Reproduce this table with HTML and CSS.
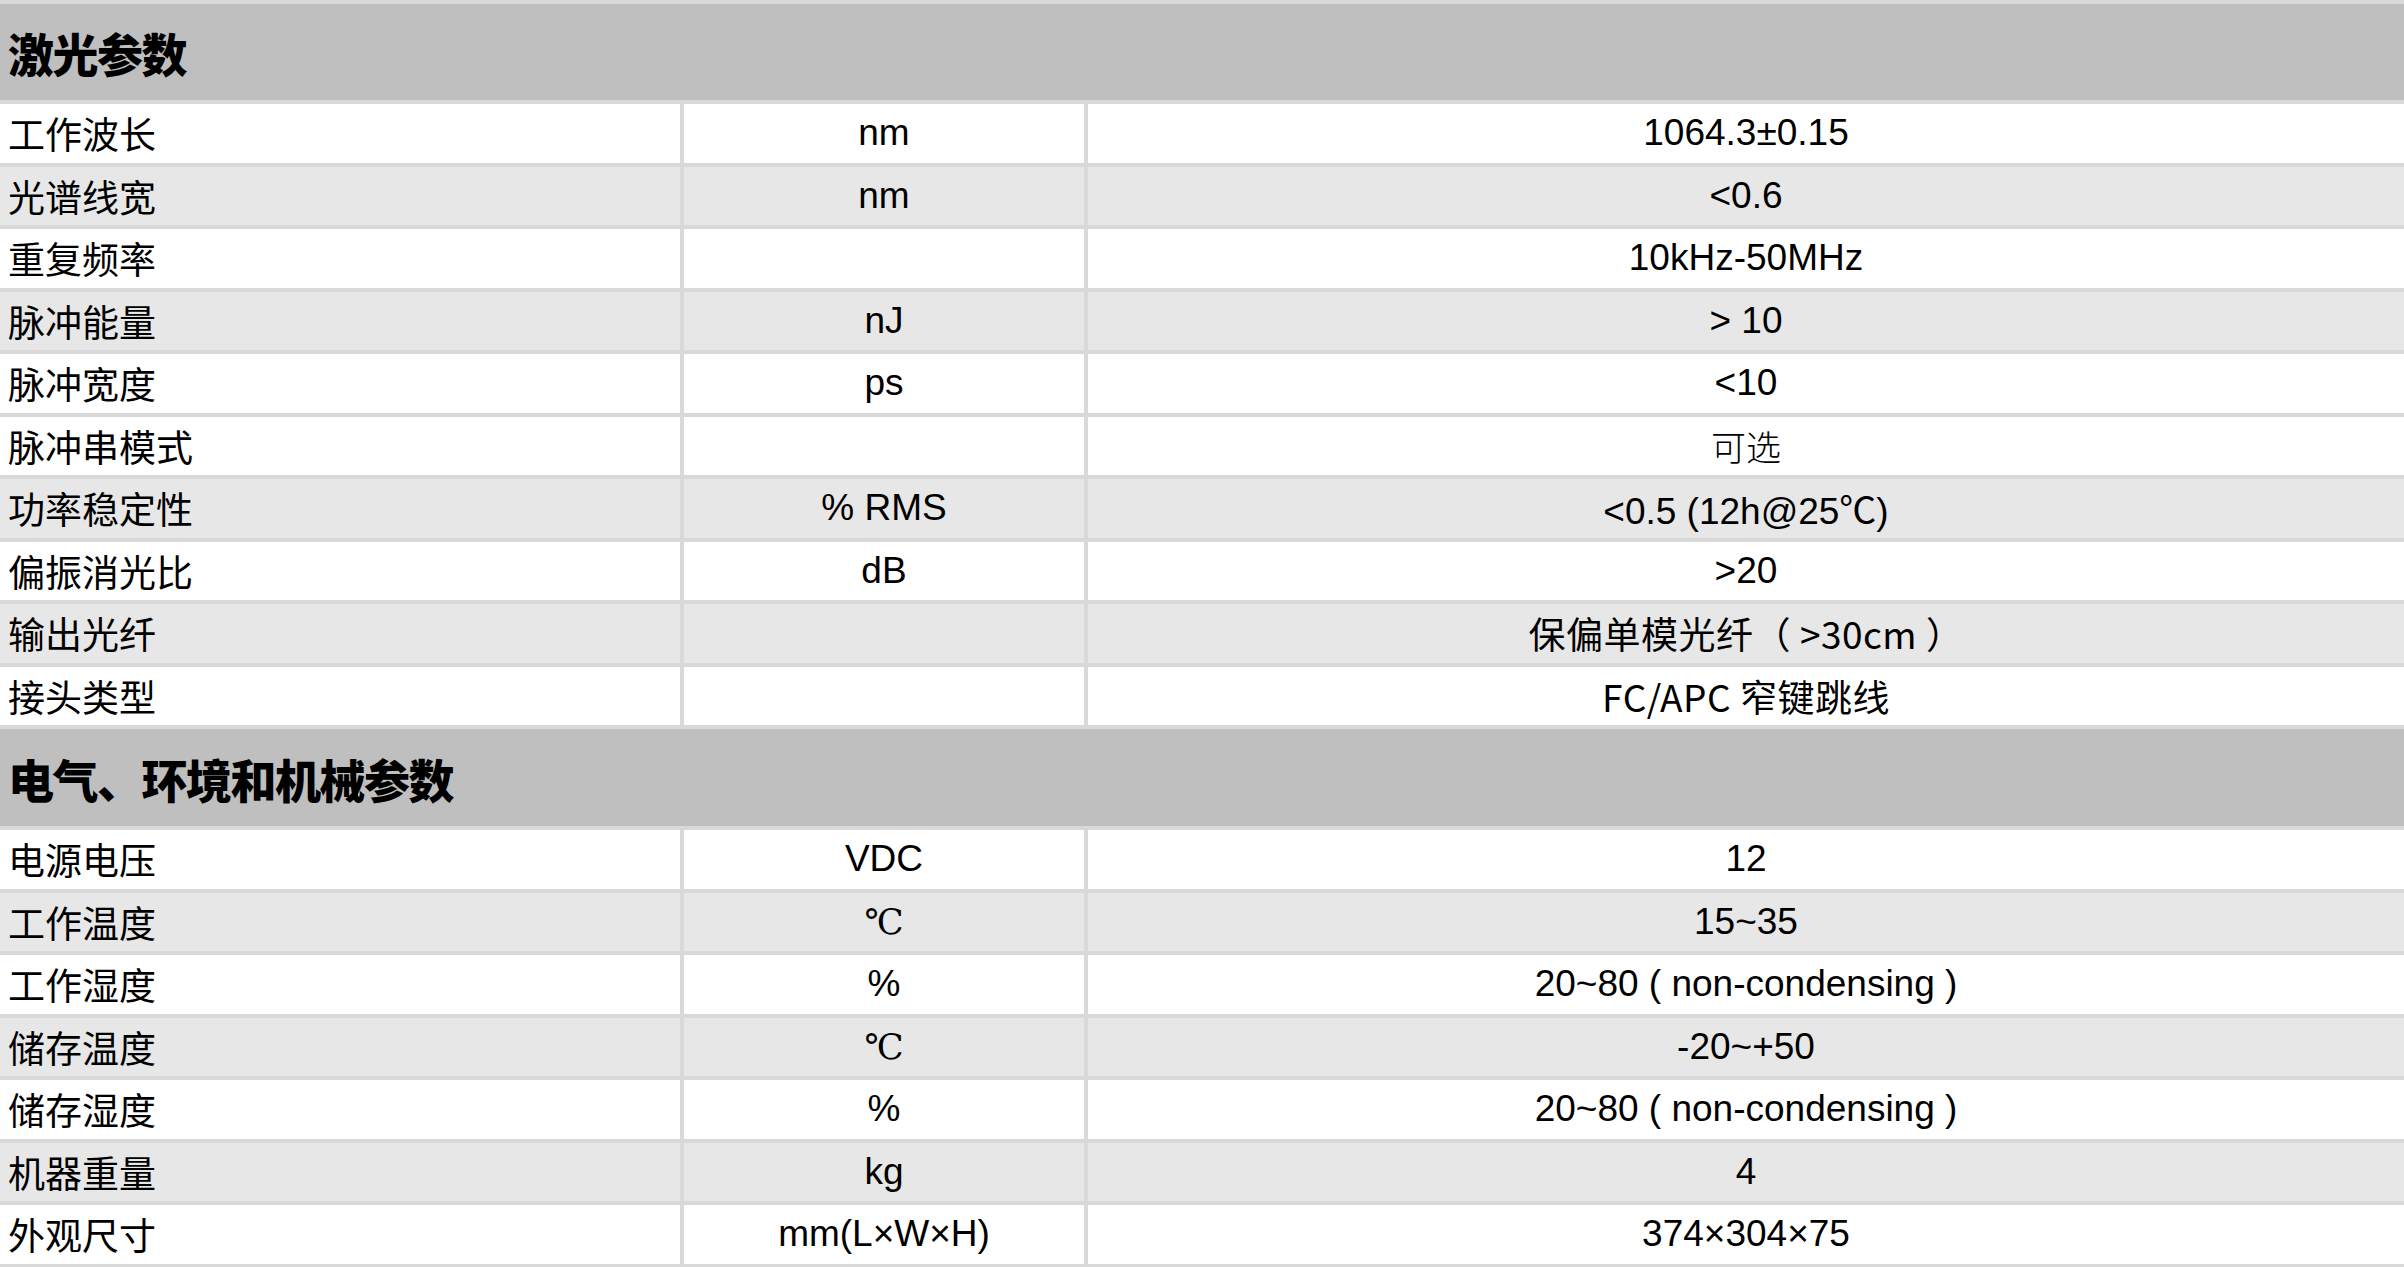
FILE: index.html
```html
<!DOCTYPE html>
<html lang="zh-CN">
<head>
<meta charset="utf-8">
<title>参数</title>
<link rel="stylesheet" href="styles.css">
</head>
<body>
<div class="spec">
  <div class="section">激光参数</div>

  <div class="cell name">工作波长</div><div class="cell unit">nm</div><div class="cell val">1064.3±0.15</div>
  <div class="cell name alt">光谱线宽</div><div class="cell unit alt">nm</div><div class="cell val alt">&lt;0.6</div>
  <div class="cell name">重复频率</div><div class="cell unit"></div><div class="cell val">10kHz-50MHz</div>
  <div class="cell name alt">脉冲能量</div><div class="cell unit alt">nJ</div><div class="cell val alt">&gt; 10</div>
  <div class="cell name">脉冲宽度</div><div class="cell unit">ps</div><div class="cell val">&lt;10</div>
  <div class="cell name">脉冲串模式</div><div class="cell unit"></div><div class="cell val serif">可选</div>
  <div class="cell name alt">功率稳定性</div><div class="cell unit alt">% RMS</div><div class="cell val alt">&lt;0.5 (12h@25℃)</div>
  <div class="cell name">偏振消光比</div><div class="cell unit">dB</div><div class="cell val">&gt;20</div>
  <div class="cell name alt">输出光纤</div><div class="cell unit alt"></div><div class="cell val alt yh">保偏单模光纤（ &gt;30cm ）</div>
  <div class="cell name">接头类型</div><div class="cell unit"></div><div class="cell val yh">FC/APC 窄键跳线</div>

  <div class="section">电气、环境和机械参数</div>

  <div class="cell name">电源电压</div><div class="cell unit">VDC</div><div class="cell val">12</div>
  <div class="cell name alt">工作温度</div><div class="cell unit alt serif">℃</div><div class="cell val alt">15~35</div>
  <div class="cell name">工作湿度</div><div class="cell unit">%</div><div class="cell val">20~80 ( non-condensing )</div>
  <div class="cell name alt">储存温度</div><div class="cell unit alt serif">℃</div><div class="cell val alt">-20~+50</div>
  <div class="cell name">储存湿度</div><div class="cell unit">%</div><div class="cell val">20~80 ( non-condensing )</div>
  <div class="cell name alt">机器重量</div><div class="cell unit alt">kg</div><div class="cell val alt">4</div>
  <div class="cell name">外观尺寸</div><div class="cell unit">mm(L×W×H)</div><div class="cell val">374×304×75</div>
</div>
</body>
</html>
```

FILE: styles.css
```css
html, body {
  margin: 0;
  padding: 0;
  overflow: hidden;
  background: #d9d9d9;
}

.spec {
  display: grid;
  grid-template-columns: 680px 400px 1fr;
  grid-template-rows: 96px repeat(10, 58.5px) 97px repeat(7, 58.5px);
  column-gap: 4px;
  row-gap: 4px;
  padding-top: 4px;
  background: #d9d9d9;
  font-family: "Liberation Sans", "Noto Sans CJK SC", sans-serif;
  font-size: 37px;
  color: #000;
}

.section {
  grid-column: 1 / -1;
  display: flex;
  align-items: center;
  padding-left: 8px;
  background: #bfbfbf;
  font-family: "Noto Sans CJK SC", sans-serif;
  font-weight: 900;
  font-size: 46px;
  letter-spacing: -1.5px;
}

.cell {
  display: flex;
  align-items: center;
  background: #ffffff;
  white-space: nowrap;
}

.cell.alt {
  background: #e7e7e7;
}

.name {
  padding-left: 8px;
  font-family: "Noto Sans CJK SC", sans-serif;
  font-size: 37px;
}

.unit, .val {
  justify-content: center;
}

.serif {
  font-family: "DejaVu Serif", "Liberation Serif", "Noto Sans CJK SC", serif;
  font-size: 35px;
  font-weight: 300;
}

.val.serif {
  font-family: "Noto Sans CJK SC", serif;
  font-weight: 300;
}

.yh {
  font-family: "Noto Sans CJK SC", sans-serif;
  font-size: 37px;
  letter-spacing: 0.5px;
}
```
